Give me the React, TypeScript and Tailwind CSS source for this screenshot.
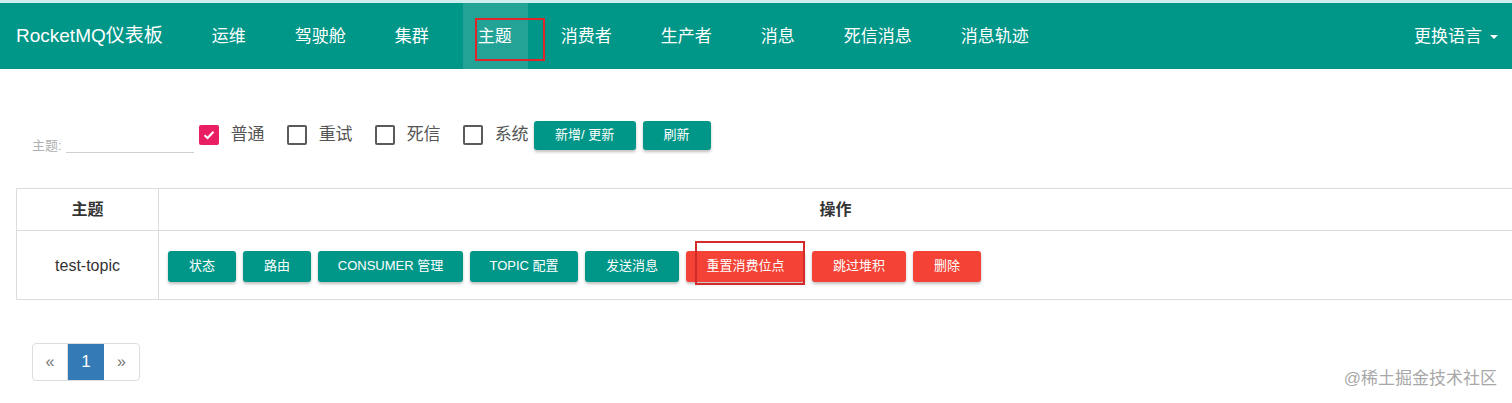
const font = "font-['Liberation_Sans','Noto_Sans_CJK_SC',sans-serif]";

const navItems = ["运维", "驾驶舱", "集群", "主题", "消费者", "生产者", "消息", "死信消息", "消息轨迹"];

const actions = [
  { label: "状态", w: "w-[68px]", red: false },
  { label: "路由", w: "w-[68px]", red: false },
  { label: "CONSUMER 管理", w: "w-[145px]", red: false },
  { label: "TOPIC 配置", w: "w-[108px]", red: false },
  { label: "发送消息", w: "w-[94px]", red: false },
  { label: "重置消费位点", w: "w-[119px]", red: true },
  { label: "跳过堆积", w: "w-[94px]", red: true },
  { label: "删除", w: "w-[68px]", red: true },
];

function Checkbox({ checked, label, last }: { checked?: boolean; label: string; last?: boolean }) {
  return (
    <div className={`flex items-center ${last ? "" : "w-[88px]"}`}>
      {checked ? (
        <span className="w-[20px] h-[20px] rounded-[2px] bg-[#e91e63] flex items-center justify-center">
          <svg width="14" height="14" viewBox="0 0 14 14" fill="none">
            <path d="M2.5 7.2 L5.6 10 L11.5 3.8" stroke="white" strokeWidth="2" />
          </svg>
        </span>
      ) : (
        <span className="w-[20px] h-[20px] rounded-[2px] border-2 border-[#5a5a5a]" />
      )}
      <span className="ml-[12px] text-[17px] text-[#555]">{label}</span>
    </div>
  );
}

export default function App() {
  return (
    <div className={`min-h-[403px] bg-white relative ${font}`}>
      {/* top nav */}
      <div className="h-[3px] bg-[#cfeeee]" />
      <nav className="h-[66px] bg-[#009688] flex items-stretch text-white">
        <div className="pl-[16px] pr-[49px] flex items-center text-[19px]">RocketMQ仪表板</div>
        {navItems.map((item) => (
          <div
            key={item}
            className={`relative flex items-center text-[17px] ${
              item === "主题" ? "bg-[#22a396] pl-[15px] pr-[16px] -ml-[15px] mr-[33px]" : "mr-[49px]"
            }`}
          >
            <span className="mt-[2px]">{item}</span>
            {item === "主题" && (
              <span className="absolute left-[12px] top-[15px] w-[70px] h-[43px] border-2 border-[#e0252a]" />
            )}
          </div>
        ))}
        <div className="ml-auto pr-[14px] flex items-center text-[17px] mt-[1px]">
          更换语言
          <span className="ml-[8px] w-0 h-0 border-l-[4px] border-r-[4px] border-t-[4px] border-l-transparent border-r-transparent border-t-white" />
        </div>
      </nav>

      {/* filter row */}
      <div className="flex items-center mt-[51px] h-[30px]">
        <div className="flex items-end ml-[32px] mt-[20px]">
          <span className="text-[13px] text-[#b0b0b0] leading-none mb-[1px]">主题:</span>
          <span className="ml-[4px] w-[128px] border-b border-[#cfcfcf] h-[16px]" />
        </div>
        <div className="ml-[5px] flex items-center">
          <Checkbox checked label="普通" />
          <Checkbox label="重试" />
          <Checkbox label="死信" />
          <Checkbox label="系统" last />
        </div>
        <button className="ml-[5px] w-[102px] h-[29px] rounded-[3px] bg-[#009688] text-white text-[13px] shadow-[0_2px_3px_rgba(0,0,0,0.25)]">
          新增/ 更新
        </button>
        <button className="ml-[7px] w-[68px] h-[29px] rounded-[3px] bg-[#009688] text-white text-[13px] shadow-[0_2px_3px_rgba(0,0,0,0.25)]">
          刷新
        </button>
      </div>

      {/* table */}
      <div className="mt-[38px] ml-[16px] border border-[#dcdcdc] border-r-0">
        <div className="flex h-[42px] border-b border-[#dcdcdc] font-bold text-[16px] text-[#333]">
          <div className="w-[142px] border-r border-[#dcdcdc] flex items-center justify-center">主题</div>
          <div className="flex-1 flex items-center justify-center">操作</div>
        </div>
        <div className="flex h-[68px]">
          <div className="w-[142px] border-r border-[#dcdcdc] flex items-center justify-center text-[16px] text-[#333] pt-[2px]">
            test-topic
          </div>
          <div className="flex-1 flex items-center pl-[9px] gap-[7px] pt-[2px]">
            {actions.map((a) => (
              <button
                key={a.label}
                className={`relative ${a.w} h-[31px] rounded-[3px] text-white text-[13px] shadow-[0_2px_3px_rgba(0,0,0,0.25)] ${
                  a.red ? "bg-[#f44336]" : "bg-[#009688]"
                }`}
              >
                {a.label}
                {a.label === "重置消费位点" && (
                  <span className="absolute left-[9px] -top-[10px] w-[110px] h-[44px] border-2 border-[#d42a2a]" />
                )}
              </button>
            ))}
          </div>
        </div>
      </div>

      {/* pagination */}
      <div className="mt-[43px] ml-[32px] flex h-[38px] w-fit border border-[#dddddd] rounded-[4px] overflow-hidden text-[#777] text-[16px]">
        <div className="w-[35px] flex items-center justify-center border-r border-[#dddddd]">«</div>
        <div className="w-[36px] flex items-center justify-center bg-[#337ab7] text-white text-[17px]">1</div>
        <div className="w-[35px] flex items-center justify-center">»</div>
      </div>

      <div className="absolute right-[15px] bottom-[12px] text-[17px] text-[#a8a8a8]">@稀土掘金技术社区</div>
    </div>
  );
}
